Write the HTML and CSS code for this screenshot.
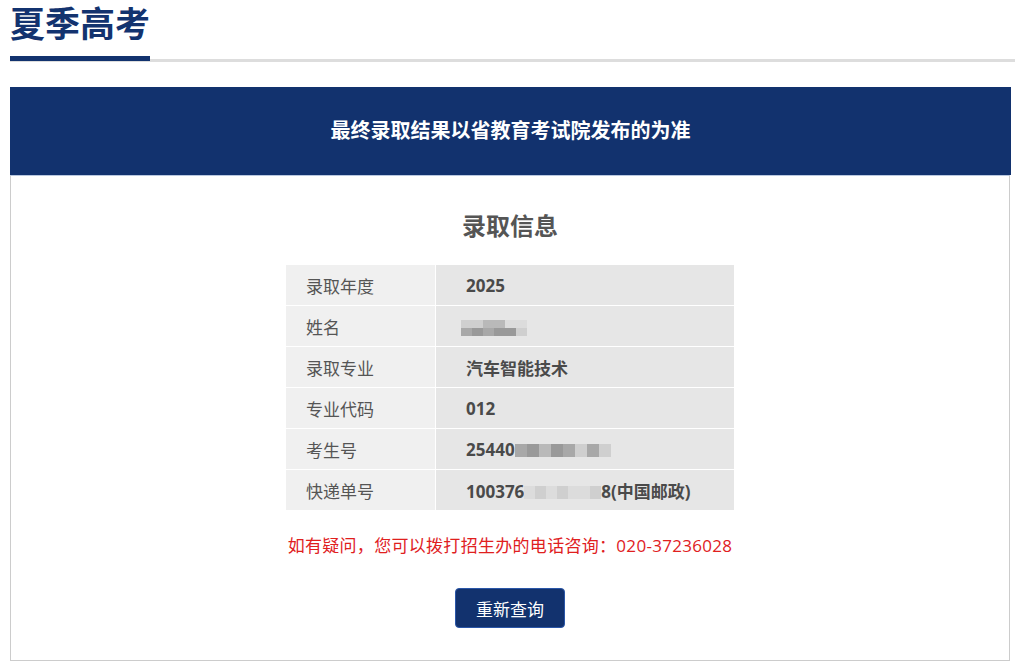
FILE: index.html
```html
<!DOCTYPE html>
<html lang="zh-CN">
<head>
    <meta charset="UTF-8">
    <meta name="viewport" content="width=device-width, initial-scale=1.0">
    <title>夏季高考</title>
    <link rel="stylesheet" href="styles.css">
</head>
<body>

<div class="page-header">
    <h1>夏季高考</h1>
</div>

<div class="main">
    <div class="notice">最终录取结果以省教育考试院发布的为准</div>

    <div class="result-card">
        <h2>录取信息</h2>

        <table class="info-table">
            <tr>
                <td class="label">录取年度</td>
                <td class="value">2025</td>
            </tr>
            <tr>
                <td class="label">姓名</td>
                <td class="value">
                    <span class="mosaic name-mosaic">
                        <span class="m-row">
                            <i class="c1"></i><i class="c1"></i><i class="c2"></i><i class="c2"></i><i class="c0"></i><i class="c0"></i>
                        </span>
                        <span class="m-row">
                            <i class="c3"></i><i class="c4"></i><i class="c3"></i><i class="c4"></i><i class="c4"></i><i class="c1"></i>
                        </span>
                    </span>
                </td>
            </tr>
            <tr>
                <td class="label">录取专业</td>
                <td class="value">汽车智能技术</td>
            </tr>
            <tr>
                <td class="label">专业代码</td>
                <td class="value">012</td>
            </tr>
            <tr>
                <td class="label">考生号</td>
                <td class="value">25440<span class="mosaic line-mosaic"><i class="c3"></i><i class="c4"></i><i class="c2"></i><i class="c4"></i><i class="c3"></i><i class="c1"></i><i class="c3"></i><i class="c1"></i></span></td>
            </tr>
            <tr>
                <td class="label">快递单号</td>
                <td class="value">100376<span class="mosaic line-mosaic light"><i class="c0"></i><i class="c1"></i><i class="c0"></i><i class="c1"></i><i class="c0"></i><i class="c0"></i><i class="c1"></i></span>8(中国邮政)</td>
            </tr>
        </table>

        <p class="hotline">如有疑问，您可以拨打招生办的电话咨询：020-37236028</p>

        <button class="btn-query" onclick="location.reload()">重新查询</button>
    </div>
</div>

</body>
</html>
```

FILE: styles.css
```css
body {
    font-family: "Open Sans", "Noto Sans CJK SC", sans-serif;
    background: #fff;
    color: #555;
    margin: 0;
    padding: 0;
}
.page-header {
    display: flex;
    margin-left: 10px;
    border-bottom: 3px solid #ddd;
}
.page-header h1 {
    margin: 0 0 -2px 0;
    width: 140px;
    font-size: 35px;
    line-height: 48px;
    padding-bottom: 8px;
    font-weight: bold;
    color: #13336f;
    border-bottom: 5px solid #12326e;
    white-space: nowrap;
}
.main {
    margin: 25px 4px 0 10px;
}
.notice {
    height: 88px;
    line-height: 88px;
    background: #12326e;
    color: #fff;
    font-size: 20px;
    font-weight: bold;
    text-align: center;
}
.result-card {
    margin-right: 1px;
    border: 1px solid #ccc;
    border-top-color: #b9c8e0;
    padding: 33px 0 32px;
    text-align: center;
}
.result-card h2 {
    margin: 0;
    font-size: 24px;
    line-height: 34px;
    font-weight: bold;
    color: #555;
}
.info-table {
    margin: 21px auto 0;
    width: 450px;
    border-collapse: separate;
    border-spacing: 1px;
    font-size: 17px;
    text-align: left;
}
.info-table td {
    height: 40px;
    padding: 0;
}
.info-table .label {
    width: 129px;
    padding-left: 20px;
    background: #f0f0f0;
    color: #555;
}
.info-table .value {
    padding-left: 30px;
    background: #e6e6e6;
    color: #4a4a4a;
    font-weight: bold;
}
.mosaic {
    display: inline-flex;
    vertical-align: middle;
}
.mosaic i {
    display: block;
    width: 12px;
    height: 12px;
}
.name-mosaic {
    flex-direction: column;
    margin-left: -5px;
}
.name-mosaic .m-row {
    display: flex;
}
.name-mosaic i {
    width: 11px;
    height: 8px;
}
.line-mosaic i {
    height: 13px;
}
.line-mosaic.light i {
    width: 11px;
}
.c0 { background: #dcdcdc; }
.c1 { background: #cfcfcf; }
.c2 { background: #b9b9b9; }
.c3 { background: #a8a8a8; }
.c4 { background: #999; }
.hotline {
    margin: 23px 0 0;
    font-size: 17px;
    line-height: 24px;
    letter-spacing: 0.3px;
    color: #e0201e;
}
.btn-query {
    margin-top: 30px;
    width: 110px;
    height: 40px;
    background: #12326e;
    color: #fff;
    border: 1px solid #2a56a8;
    border-radius: 4px;
    font-family: "Open Sans", "Noto Sans CJK SC", sans-serif;
    font-size: 17px;
    cursor: pointer;
}
.btn-query:hover {
    background: #0d2657;
}
```
